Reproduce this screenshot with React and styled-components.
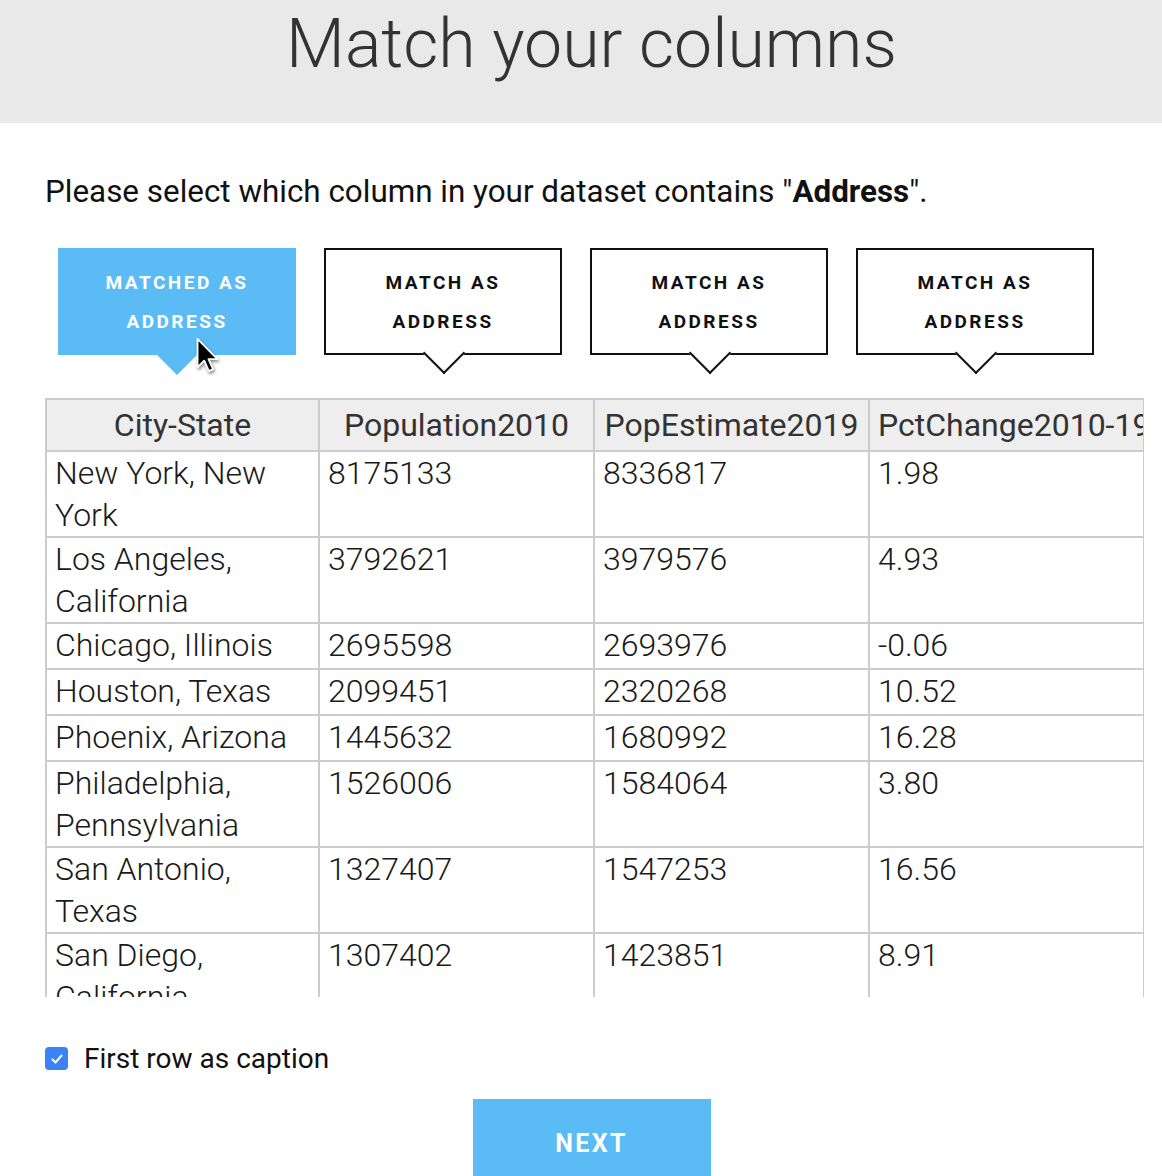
import React from "react";
import styled, { createGlobalStyle, css } from "styled-components";

const Global = createGlobalStyle`
  html, body { margin: 0; padding: 0; background: #fff; }
  body { font-family: Roboto, "Liberation Sans", Arial, sans-serif; color: #222; overflow: hidden; }
  * { box-sizing: border-box; }
`;

const Page = styled.div`
  width: 1162px;
  height: 1176px;
  overflow: hidden;
  display: flex;
  flex-direction: column;
  & > * { flex-shrink: 0; }
`;

const Banner = styled.header`
  height: 123px;
  background: #e9e9e9;
  display: flex;
  justify-content: center;
`;

const Title = styled.h1`
  margin: 0;
  margin-top: 4px;
  font-size: 68px;
  font-weight: 300;
  line-height: 80px;
  color: #333;
  margin-left: 21px;
`;

const Content = styled.main`
  padding: 0 19px 0 45px;
  display: flex;
  flex-direction: column;
  & > * { flex-shrink: 0; }
`;

const Intro = styled.p`
  margin: 48px 0 0;
  font-size: 31.4px;
  line-height: 42px;
  font-weight: 400;
  color: #111;
  b { font-weight: 700; }
`;

const ButtonRow = styled.div`
  display: flex;
  gap: 28px;
  padding-left: 13px;
  margin-top: 35px;
  position: relative;
`;

const MatchButton = styled.button`
  position: relative;
  width: 238px;
  height: 107px;
  padding: 0;
  font-family: Roboto, "Liberation Sans", Arial, sans-serif;
  font-size: 19px;
  font-weight: 700;
  letter-spacing: 2.5px;
  line-height: 39px;
  text-align: center;
  cursor: pointer;
  ${(p) =>
    p.$active
      ? css`
          background: #5bbcf5;
          color: #fff;
          border: none;
          &::after {
            content: "";
            position: absolute;
            left: 50%;
            bottom: -20px;
            margin-left: -20px;
            border-left: 20px solid transparent;
            border-right: 20px solid transparent;
            border-top: 20px solid #5bbcf5;
          }
        `
      : css`
          background: #fff;
          color: #111;
          border: 2px solid #111;
          &::after {
            content: "";
            position: absolute;
            left: 50%;
            bottom: -15px;
            width: 28px;
            height: 28px;
            margin-left: -14px;
            background: #fff;
            border-right: 2px solid #111;
            border-bottom: 2px solid #111;
            transform: rotate(45deg);
          }
        `}
`;

const Cursor = styled.svg`
  position: absolute;
  left: 150px;
  top: 89px;
  width: 24px;
  height: 36px;
  filter: drop-shadow(1px 2px 1.5px rgba(0, 0, 0, 0.45));
`;

const TableWrap = styled.div`
  margin-top: 43px;
  width: 1099px;
  height: 599px;
  overflow: hidden;
`;

const Table = styled.table`
  border-collapse: collapse;
  table-layout: fixed;
  width: 1098px;
`;

const HeadCell = styled.th`
  background: #eeeeee;
  border: 2px solid #cccccc;
  font-size: 32px;
  font-weight: 400;
  color: #333;
  line-height: 40px;
  height: 52px;
  padding: 2px 8px;
  white-space: nowrap;
  overflow: hidden;
  text-align: center;
  box-shadow: 0 3px 3px -1px rgba(0, 0, 0, 0.3);
  position: relative;
  z-index: 1;
`;

const Cell = styled.td`
  border: 2px solid #cccccc;
  font-size: 32px;
  font-weight: 300;
  color: #1a1a1a;
  line-height: 42px;
  padding: 0 8px;
  vertical-align: top;
  height: 46px;
`;

const Footer = styled.div`
  display: flex;
  flex-direction: column;
`;

const CheckLabel = styled.label`
  display: flex;
  align-items: center;
  gap: 16px;
  margin-top: 45px;
  font-size: 28px;
  color: #111;
  font-weight: 400;
`;

const Box = styled.span`
  width: 23px;
  height: 23px;
  border-radius: 4px;
  background: #3b82f6;
  display: inline-flex;
  align-items: center;
  justify-content: center;
`;

const NextButton = styled.button`
  align-self: center;
  margin-top: 24px;
  margin-left: -5px;
  width: 238px;
  height: 90px;
  border: none;
  background: #5bbcf5;
  color: #fff;
  font-family: Roboto, "Liberation Sans", Arial, sans-serif;
  font-size: 25px;
  font-weight: 700;
  letter-spacing: 2.4px;
  padding-bottom: 2px;
`;

const headers = ["City-State", "Population2010", "PopEstimate2019", "PctChange2010-19"];
const rows = [
  ["New York, New York", "8175133", "8336817", "1.98"],
  ["Los Angeles, California", "3792621", "3979576", "4.93"],
  ["Chicago, Illinois", "2695598", "2693976", "-0.06"],
  ["Houston, Texas", "2099451", "2320268", "10.52"],
  ["Phoenix, Arizona", "1445632", "1680992", "16.28"],
  ["Philadelphia, Pennsylvania", "1526006", "1584064", "3.80"],
  ["San Antonio, Texas", "1327407", "1547253", "16.56"],
  ["San Diego, California", "1307402", "1423851", "8.91"],
  ["Dallas, Texas", "1197816", "1343573", "12.17"],
];

export default function App() {
  return (
    <Page>
      <Global />
      <Banner>
        <Title>Match your columns</Title>
      </Banner>
      <Content>
        <Intro>
          Please select which column in your dataset contains "<b>Address</b>".
        </Intro>
        <ButtonRow>
          <MatchButton $active>
            MATCHED AS
            <br />
            ADDRESS
          </MatchButton>
          {[1, 2, 3].map((i) => (
            <MatchButton key={i}>
              MATCH AS
              <br />
              ADDRESS
            </MatchButton>
          ))}
          <Cursor viewBox="0 0 12 19">
            <path
              d="M1 1 L1 16 L4.5 12.5 L7 18 L9.2 17 L6.8 11.7 L11.5 11.7 Z"
              fill="#000"
              stroke="#fff"
              strokeWidth="1"
              strokeLinejoin="round"
            />
          </Cursor>
        </ButtonRow>
        <TableWrap>
          <Table>
            <colgroup>
              <col style={{ width: 273 }} />
              <col style={{ width: 275 }} />
              <col style={{ width: 275 }} />
              <col style={{ width: 275 }} />
            </colgroup>
            <thead>
              <tr>
                {headers.map((h) => (
                  <HeadCell key={h}>{h}</HeadCell>
                ))}
              </tr>
            </thead>
            <tbody>
              {rows.map((r) => (
                <tr key={r[0]}>
                  {r.map((c, i) => (
                    <Cell key={i}>{c}</Cell>
                  ))}
                </tr>
              ))}
            </tbody>
          </Table>
        </TableWrap>
        <Footer>
          <CheckLabel>
            <Box>
              <svg width="14" height="14" viewBox="0 0 14 14">
                <path d="M2.5 7.5 L5.5 10.5 L11.5 3.5" fill="none" stroke="#fff" strokeWidth="2" strokeLinecap="round" strokeLinejoin="round" />
              </svg>
            </Box>
            First row as caption
          </CheckLabel>
          <NextButton>NEXT</NextButton>
        </Footer>
      </Content>
    </Page>
  );
}
